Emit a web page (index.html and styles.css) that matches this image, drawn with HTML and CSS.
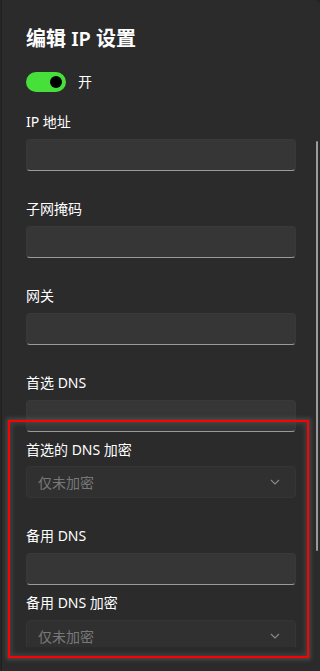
FILE: index.html
```html
<!DOCTYPE html>
<html lang="zh-CN">
<head>
<meta charset="utf-8">
<title>编辑 IP 设置</title>
<link rel="stylesheet" href="styles.css">
</head>
<body>
<div class="dialog">
  <div class="scroller">
    <h1 class="title">编辑 IP 设置</h1>

    <div class="toggle-row">
      <span class="toggle"><span class="knob"></span></span>
      <span class="toggle-text">开</span>
    </div>

    <div class="field">
      <div class="label">IP 地址</div>
      <div class="input"></div>
    </div>

    <div class="field">
      <div class="label">子网掩码</div>
      <div class="input"></div>
    </div>

    <div class="field">
      <div class="label">网关</div>
      <div class="input"></div>
    </div>

    <div class="field tight">
      <div class="label">首选 DNS</div>
      <div class="input"></div>
    </div>

    <div class="field">
      <div class="label narrow">首选的 DNS 加密</div>
      <div class="select">
        <span class="select-text">仅未加密</span>
        <svg class="chevron" width="10" height="6" viewBox="0 0 10 6"><path d="M1 1 L5 5 L9 1" fill="none" stroke="#8a8a8a" stroke-width="1.1"/></svg>
      </div>
    </div>

    <div class="field tight">
      <div class="label">备用 DNS</div>
      <div class="input"></div>
    </div>

    <div class="field">
      <div class="label">备用 DNS 加密</div>
      <div class="select">
        <span class="select-text">仅未加密</span>
        <svg class="chevron" width="10" height="6" viewBox="0 0 10 6"><path d="M1 1 L5 5 L9 1" fill="none" stroke="#8a8a8a" stroke-width="1.1"/></svg>
      </div>
    </div>
  </div>
  <div class="footer"></div>

  <div class="scrollbar"></div>
  <div class="highlight"></div>
</div>
</body>
</html>
```

FILE: styles.css
```css
/* Edit IP settings dialog, dark theme */

html, body
{ margin: 0;
  padding: 0;
  background-color: #1b2630;
}

body
{ font-family: "Noto Sans", "Noto Sans CJK SC", sans-serif;
  color: #ffffff;
}

div.dialog
{ position: relative;
  width: 318px;
  height: 671px;
  margin-left: 2px;
  background-color: #2b2b2b;
  border-top-right-radius: 6px;
  box-shadow: -1px 0 0 #202020, -2px 0 0 #262626;
  overflow: hidden;
}

div.scroller
{ height: 647px;
  overflow: hidden;
  padding: 0 24px 0 24px;
  box-sizing: border-box;
}

h1.title
{ margin: 0;
  padding-top: 25px;
  font-size: 20px;
  line-height: 28px;
  font-weight: 600;
}

div.toggle-row
{ display: flex;
  align-items: center;
  gap: 12px;
  margin-top: 19px;
  margin-bottom: 20px;
  height: 20px;
}

span.toggle
{ display: flex;
  align-items: center;
  justify-content: flex-end;
  width: 40px;
  height: 20px;
  border-radius: 10px;
  background-color: #47e03a;
  padding-right: 4px;
  box-sizing: border-box;
}

span.knob
{ width: 12px;
  height: 12px;
  border-radius: 50%;
  background-color: #000000;
}

span.toggle-text
{ font-size: 14px;
  line-height: 20px;
}

div.field
{ margin-bottom: 28px;
}

div.field.tight
{ margin-bottom: 8px;
}

div.label
{ font-size: 14px;
  line-height: 20px;
  margin-bottom: 7px;
}

div.label.narrow
{ margin-bottom: 6px;
}

div.input
{ height: 32px;
  box-sizing: border-box;
  border-radius: 4px;
  background-color: #363636;
  border: 1px solid #393939;
  border-bottom: 1px solid #9a9a9a;
}

div.select
{ display: flex;
  align-items: center;
  justify-content: space-between;
  height: 32px;
  box-sizing: border-box;
  border-radius: 4px;
  background-color: #303030;
  border: 1px solid #353535;
  padding: 0 15px 0 11px;
}

span.select-text
{ font-size: 14px;
  color: #787878;
}

svg.chevron
{ display: block;
}

div.footer
{ height: 24px;
}

/* overlays */

div.scrollbar
{ position: absolute;
  top: 141px;
  right: 2px;
  width: 2px;
  height: 410px;
  border-radius: 1px;
  background-color: #9b9b9b;
}

div.highlight
{ position: absolute;
  left: 6px;
  top: 420px;
  width: 301px;
  height: 238px;
  box-sizing: border-box;
  border: 2px solid #ff0000;
  box-shadow: 0 0 4px 2px rgba(85, 85, 85, 0.7), inset 0 0 5px 2px rgba(80, 80, 80, 0.6);
}
```
